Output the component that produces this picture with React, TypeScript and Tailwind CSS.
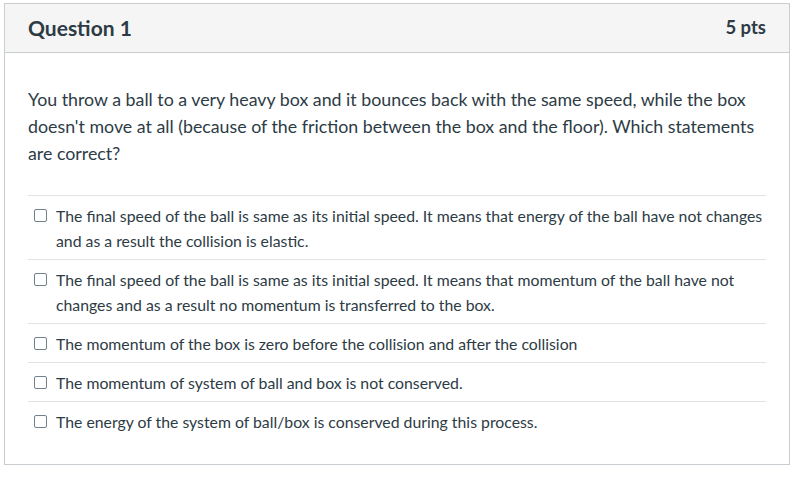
import React from 'react';

const answers = [
  'The final speed of the ball is same as its initial speed. It means that energy of the ball have not changes and as a result the collision is elastic.',
  'The final speed of the ball is same as its initial speed. It means that momentum of the ball have not changes and as a result no momentum is transferred to the box.',
  'The momentum of the box is zero before the collision and after the collision',
  'The momentum of system of ball and box is not conserved.',
  'The energy of the system of ball/box is conserved during this process.',
];

export default function App() {
  return (
    <div className="min-h-screen bg-white pt-[3px] pl-[4px] pr-[18px] font-['Lato',sans-serif] text-[#2d3b45]">
      <div className="border border-[#c7cdd1]">
        {/* Header */}
        <div className="flex items-center justify-between h-[49px] px-[23px] bg-[#f5f5f5] border-b border-[#c7cdd1]">
          <span className="text-[21px] font-bold">Question 1</span>
          <span className="text-[18.5px] font-bold text-[#2d3b45]">5 pts</span>
        </div>

        {/* Body */}
        <div className="px-[23px] pt-[33px] pb-[24px]">
          <p className="text-[17.8px] leading-[27px] pr-[8px]">
            You throw a ball to a very heavy box and it bounces back with the same speed, while the box doesn't move at all (because of the friction between the box and the floor). Which statements are correct?
          </p>

          <div className="mt-[28px]">
            {answers.map((a) => (
              <div key={a} className="flex items-start border-t border-[#e0e4e6] pt-[7px] pb-[6px]">
                <span className="mt-[6px] ml-[6px] mr-[9px] w-[13px] h-[13px] shrink-0 rounded-[2px] border border-[#73818b] bg-white" />
                <span className="text-[15.8px] leading-[25px]">{a}</span>
              </div>
            ))}
          </div>
        </div>
      </div>
    </div>
  );
}
